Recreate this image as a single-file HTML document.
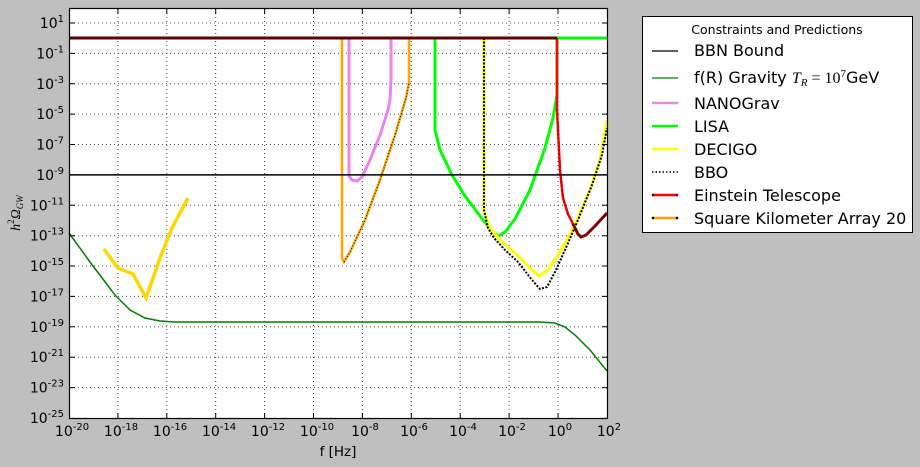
<!DOCTYPE html>
<html><head><meta charset="utf-8"><style>
html,body{margin:0;padding:0;background:#bfbfbf;}
svg{display:block;font-family:"DejaVu Sans","Liberation Sans",sans-serif;}
</style></head><body>
<svg width="920" height="467" viewBox="0 0 920 467" xmlns="http://www.w3.org/2000/svg">
<rect x="0" y="0" width="920" height="467" fill="#bfbfbf"/>
<rect x="69.5" y="8.5" width="538" height="410" fill="#fff"/>
<g stroke="#000" stroke-width="1" stroke-dasharray="1,3" opacity="0.7">
<line x1="117.9" y1="9" x2="117.9" y2="418"/><line x1="166.8" y1="9" x2="166.8" y2="418"/>
<line x1="215.7" y1="9" x2="215.7" y2="418"/><line x1="264.6" y1="9" x2="264.6" y2="418"/>
<line x1="313.5" y1="9" x2="313.5" y2="418"/><line x1="362.4" y1="9" x2="362.4" y2="418"/>
<line x1="411.3" y1="9" x2="411.3" y2="418"/><line x1="460.2" y1="9" x2="460.2" y2="418"/>
<line x1="509.1" y1="9" x2="509.1" y2="418"/><line x1="558" y1="9" x2="558" y2="418"/>
<line x1="70" y1="23" x2="607" y2="23"/><line x1="70" y1="53.4" x2="607" y2="53.4"/>
<line x1="70" y1="83.8" x2="607" y2="83.8"/><line x1="70" y1="114.1" x2="607" y2="114.1"/>
<line x1="70" y1="144.5" x2="607" y2="144.5"/><line x1="70" y1="205.3" x2="607" y2="205.3"/>
<line x1="70" y1="235.7" x2="607" y2="235.7"/><line x1="70" y1="266" x2="607" y2="266"/>
<line x1="70" y1="296.4" x2="607" y2="296.4"/><line x1="70" y1="326.8" x2="607" y2="326.8"/>
<line x1="70" y1="357.2" x2="607" y2="357.2"/><line x1="70" y1="387.6" x2="607" y2="387.6"/>
</g>
<polyline fill="none" stroke="#008000" stroke-width="1.5" points="69,233 90,262 115,295 130,310 145,318 160,321 175,322 540,322 555,323 565,327 575,335 590,350 607,371"/>
<polyline fill="none" stroke="#ffd700" stroke-width="3.5" points="104,249 118,268 133,274 146,298 160,258 172,228 188,198"/>
<polyline fill="none" stroke="#00ff00" stroke-width="3" points="435,38 435,130 440,150 452,175 465,196 480,216 492,231 498,236 505,232 515,219 530,190 545,148 553,118 557,95 557,38 607,38"/>
<polyline fill="none" stroke="#ffff00" stroke-width="3" points="484,38 484,212 490,228 500,240 515,253 530,268 539,276 548,270 560,252 575,225 590,190 600,160 607,120"/>
<polyline fill="none" stroke="#000" stroke-width="2" stroke-dasharray="2,1.5" points="484,38 484,210 488,228 494,238 505,250 518,262 532,280 540,289 547,287 555,272 565,250 578,220 592,185 602,155 607,128"/>
<polyline fill="none" stroke="#ee82ee" stroke-width="3" points="349,38 349,176 352,180 357,181 362,177 370,160 380,135 388,110 390,100 391,80 391,38"/>
<polyline fill="none" stroke="#ffa500" stroke-width="2.5" points="342,38 342,258 344,262 350,252 365,220 380,180 395,135 406,98 409,83 409,38"/>
<polyline fill="none" stroke="#000" stroke-width="1" stroke-dasharray="1,2" points="344,262 350,252 365,220 380,180 395,135 406,98 409,83"/>
<polyline fill="none" stroke="#ff0000" stroke-width="2.5" points="557,38 557,110 558,130 560,170 563,198 568,214 574,226"/>
<polyline fill="none" stroke="#800000" stroke-width="3" points="573,224 578,234 581,237 586,235 595,226 607,213"/>
<polyline fill="none" stroke="#600" stroke-width="1" stroke-dasharray="1,3" points="557,110 558,130 560,170 563,198 568,214 574,226"/>
<line x1="70" y1="174.9" x2="607" y2="174.9" stroke="#000" stroke-width="1.5"/>
<line x1="70" y1="38" x2="557" y2="38" stroke="#5a0000" stroke-width="3"/>
<g stroke="#000" stroke-width="1">
<path d="M117.9 418v-5M166.8 418v-5M215.7 418v-5M264.6 418v-5M313.5 418v-5M362.4 418v-5M411.3 418v-5M460.2 418v-5M509.1 418v-5M558 418v-5
M117.9 9v5M166.8 9v5M215.7 9v5M264.6 9v5M313.5 9v5M362.4 9v5M411.3 9v5M460.2 9v5M509.1 9v5M558 9v5
M70 23h5M70 53.4h5M70 83.8h5M70 114.1h5M70 144.5h5M70 174.9h5M70 205.3h5M70 235.7h5M70 266h5M70 296.4h5M70 326.8h5M70 357.2h5M70 387.6h5
M607 23h-5M607 53.4h-5M607 83.8h-5M607 114.1h-5M607 144.5h-5M607 174.9h-5M607 205.3h-5M607 235.7h-5M607 266h-5M607 296.4h-5M607 326.8h-5M607 357.2h-5M607 387.6h-5"/>
</g>
<rect x="69.5" y="8.5" width="538" height="410" fill="none" stroke="#000" stroke-width="1.2"/>
<g font-size="14" fill="#000" text-anchor="end">
<text x="64" y="28">10<tspan font-size="10" dy="-6">1</tspan></text>
<text x="64" y="58.4">10<tspan font-size="10" dy="-6">-1</tspan></text>
<text x="64" y="88.8">10<tspan font-size="10" dy="-6">-3</tspan></text>
<text x="64" y="119.1">10<tspan font-size="10" dy="-6">-5</tspan></text>
<text x="64" y="149.5">10<tspan font-size="10" dy="-6">-7</tspan></text>
<text x="64" y="179.9">10<tspan font-size="10" dy="-6">-9</tspan></text>
<text x="64" y="210.3">10<tspan font-size="10" dy="-6">-11</tspan></text>
<text x="64" y="240.7">10<tspan font-size="10" dy="-6">-13</tspan></text>
<text x="64" y="271">10<tspan font-size="10" dy="-6">-15</tspan></text>
<text x="64" y="301.4">10<tspan font-size="10" dy="-6">-17</tspan></text>
<text x="64" y="331.8">10<tspan font-size="10" dy="-6">-19</tspan></text>
<text x="64" y="362.2">10<tspan font-size="10" dy="-6">-21</tspan></text>
<text x="64" y="392.6">10<tspan font-size="10" dy="-6">-23</tspan></text>
<text x="64" y="423">10<tspan font-size="10" dy="-6">-25</tspan></text>
</g>
<g font-size="14" fill="#000" text-anchor="middle">
<text x="72" y="436">10<tspan font-size="10" dy="-6">-20</tspan></text>
<text x="121" y="436">10<tspan font-size="10" dy="-6">-18</tspan></text>
<text x="170" y="436">10<tspan font-size="10" dy="-6">-16</tspan></text>
<text x="219" y="436">10<tspan font-size="10" dy="-6">-14</tspan></text>
<text x="268" y="436">10<tspan font-size="10" dy="-6">-12</tspan></text>
<text x="317" y="436">10<tspan font-size="10" dy="-6">-10</tspan></text>
<text x="365" y="436">10<tspan font-size="10" dy="-6">-8</tspan></text>
<text x="414" y="436">10<tspan font-size="10" dy="-6">-6</tspan></text>
<text x="463" y="436">10<tspan font-size="10" dy="-6">-4</tspan></text>
<text x="512" y="436">10<tspan font-size="10" dy="-6">-2</tspan></text>
<text x="560" y="436">10<tspan font-size="10" dy="-6">0</tspan></text>
<text x="609" y="436">10<tspan font-size="10" dy="-6">2</tspan></text>
</g>
<text x="338" y="456" font-size="13.5" text-anchor="middle">f [Hz]</text>
<text transform="translate(20,213) rotate(-90)" font-size="14" text-anchor="middle" font-family="Liberation Serif,serif" font-style="italic">h<tspan font-size="9" dy="-6" font-style="normal">2</tspan><tspan dy="6">Ω</tspan><tspan font-size="9" dy="3">GW</tspan></text>
<rect x="642.5" y="16.5" width="270" height="216" fill="#fff" stroke="#000" stroke-width="1"/>
<text x="777" y="34" font-size="12.5" text-anchor="middle">Constraints and Predictions</text>
<g font-size="16" fill="#000">
<line x1="652" y1="51" x2="678" y2="51" stroke="#000" stroke-width="1.2"/>
<text x="694" y="56">BBN Bound</text>
<line x1="652" y1="78" x2="678" y2="78" stroke="#008000" stroke-width="1.2"/>
<text x="694" y="83">f(R) Gravity <tspan font-family="Liberation Serif,serif" font-style="italic">T</tspan><tspan font-family="Liberation Serif,serif" font-style="italic" font-size="11" dy="3">R</tspan><tspan font-family="Liberation Serif,serif" dy="-3"> = 10</tspan><tspan font-family="Liberation Serif,serif" font-size="11" dy="-6">7</tspan><tspan dy="6">GeV</tspan></text>
<line x1="652" y1="103" x2="678" y2="103" stroke="#ee82ee" stroke-width="2.5"/>
<text x="694" y="109">NANOGrav</text>
<line x1="652" y1="126" x2="678" y2="126" stroke="#00ff00" stroke-width="2.5"/>
<text x="694" y="132">LISA</text>
<line x1="652" y1="149" x2="678" y2="149" stroke="#ffff00" stroke-width="2.5"/>
<text x="694" y="155">DECIGO</text>
<line x1="652" y1="172" x2="678" y2="172" stroke="#000" stroke-width="1.5" stroke-dasharray="1.5,2"/>
<text x="694" y="178">BBO</text>
<line x1="652" y1="195" x2="678" y2="195" stroke="#ff0000" stroke-width="2.5"/>
<circle cx="653" cy="195" r="1.3" fill="#600"/><circle cx="677" cy="195" r="1.3" fill="#600"/>
<text x="694" y="201">Einstein Telescope</text>
<line x1="652" y1="218" x2="678" y2="218" stroke="#ffa500" stroke-width="2.5"/>
<circle cx="653" cy="218" r="1.3" fill="#000"/><circle cx="677" cy="218" r="1.3" fill="#000"/>
<text x="694" y="224">Square Kilometer Array 20</text>
</g>
</svg>
</body></html>
